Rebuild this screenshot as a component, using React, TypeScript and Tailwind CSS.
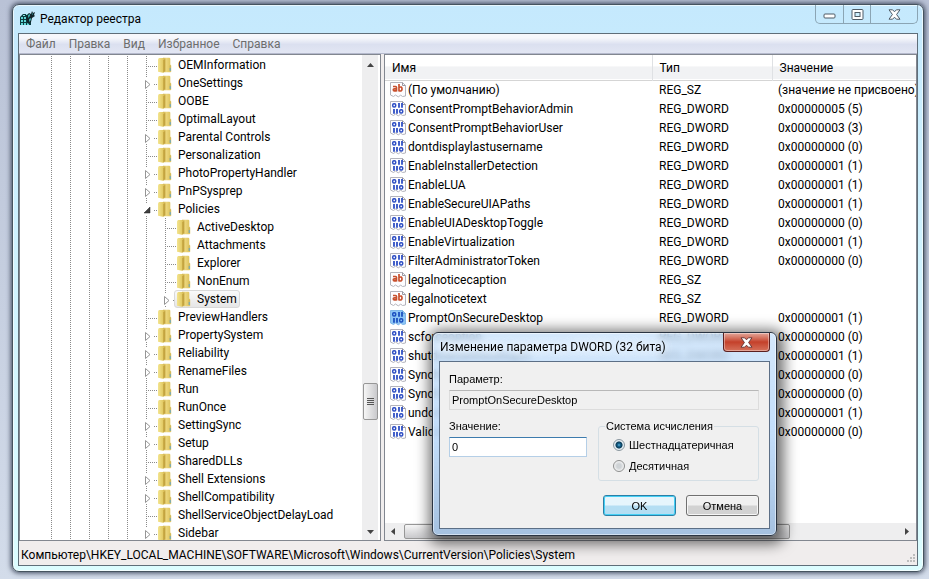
import type { ReactNode } from "react";

const uiFont = "font-['Roboto','Open_Sans',sans-serif]";

type Expander = "none" | "closed" | "open";
type Node = { name: string; expander?: Expander; level?: number; selected?: boolean };

const nodes: Node[] = [
  { name: "OEMInformation" },
  { name: "OneSettings", expander: "closed" },
  { name: "OOBE" },
  { name: "OptimalLayout" },
  { name: "Parental Controls", expander: "closed" },
  { name: "Personalization" },
  { name: "PhotoPropertyHandler", expander: "closed" },
  { name: "PnPSysprep", expander: "closed" },
  { name: "Policies", expander: "open" },
  { name: "ActiveDesktop", level: 1 },
  { name: "Attachments", level: 1 },
  { name: "Explorer", level: 1 },
  { name: "NonEnum", level: 1 },
  { name: "System", level: 1, expander: "closed", selected: true },
  { name: "PreviewHandlers" },
  { name: "PropertySystem", expander: "closed" },
  { name: "Reliability", expander: "closed" },
  { name: "RenameFiles", expander: "closed" },
  { name: "Run" },
  { name: "RunOnce" },
  { name: "SettingSync", expander: "closed" },
  { name: "Setup", expander: "closed" },
  { name: "SharedDLLs" },
  { name: "Shell Extensions", expander: "closed" },
  { name: "ShellCompatibility", expander: "closed" },
  { name: "ShellServiceObjectDelayLoad" },
  { name: "Sidebar", expander: "closed" },
];

type Value = { name: string; type: "REG_SZ" | "REG_DWORD"; data: string; selected?: boolean };

const values: Value[] = [
  { name: "(По умолчанию)", type: "REG_SZ", data: "(значение не присвоено)" },
  { name: "ConsentPromptBehaviorAdmin", type: "REG_DWORD", data: "0x00000005 (5)" },
  { name: "ConsentPromptBehaviorUser", type: "REG_DWORD", data: "0x00000003 (3)" },
  { name: "dontdisplaylastusername", type: "REG_DWORD", data: "0x00000000 (0)" },
  { name: "EnableInstallerDetection", type: "REG_DWORD", data: "0x00000001 (1)" },
  { name: "EnableLUA", type: "REG_DWORD", data: "0x00000001 (1)" },
  { name: "EnableSecureUIAPaths", type: "REG_DWORD", data: "0x00000001 (1)" },
  { name: "EnableUIADesktopToggle", type: "REG_DWORD", data: "0x00000000 (0)" },
  { name: "EnableVirtualization", type: "REG_DWORD", data: "0x00000001 (1)" },
  { name: "FilterAdministratorToken", type: "REG_DWORD", data: "0x00000000 (0)" },
  { name: "legalnoticecaption", type: "REG_SZ", data: "" },
  { name: "legalnoticetext", type: "REG_SZ", data: "" },
  { name: "PromptOnSecureDesktop", type: "REG_DWORD", data: "0x00000001 (1)", selected: true },
  { name: "scforceoption", type: "REG_DWORD", data: "0x00000000 (0)" },
  { name: "shutdownwithoutlogon", type: "REG_DWORD", data: "0x00000001 (1)" },
  { name: "SynchronousMachineGroupPolicy", type: "REG_DWORD", data: "0x00000000 (0)" },
  { name: "SynchronousUserGroupPolicy", type: "REG_DWORD", data: "0x00000000 (0)" },
  { name: "undockwithoutlogon", type: "REG_DWORD", data: "0x00000001 (1)" },
  { name: "ValidateAdminCodeSignatures", type: "REG_DWORD", data: "0x00000000 (0)" },
];

function AppIcon() {
  return (
    <svg width="17" height="17" viewBox="0 0 17 17" aria-hidden="true">
      <path d="M1 7l3-3h7l1 2v9H1z" fill="#0d3b3f" />
      <path d="M2 7h2v2H2zM5 7h2v2H5zM2 10h2v2H2zM5 10h2v2H5zM2 13h2v2H2zM5 13h2v2H5zM8 13h2v2H8z" fill="#5fd6d6" />
      <path d="M4 5h2v1H4zM7 4h2v1H7z" fill="#8de6e6" />
      <path d="M8 5l2-2 2 1 1-3 1 2 2-1-1 3 1 1-3 2-1 4-3 2-2-5z" fill="#10242a" />
      <path d="M9 5l2-1v2l-2 2zM10 9l2-1v2l-2 2zM13 3l1 1-1 1z" fill="#3aa9a9" />
    </svg>
  );
}

function FolderIcon() {
  return (
    <svg width="14" height="16" viewBox="0 0 14 16" className="shrink-0" aria-hidden="true">
      <defs>
        <linearGradient id="folder-cover" x1="0" x2="1">
          <stop offset="0" stopColor="#f3e48f" />
          <stop offset="1" stopColor="#dfc55c" />
        </linearGradient>
        <linearGradient id="folder-back" x1="0" x2="1">
          <stop offset="0" stopColor="#c9ab48" />
          <stop offset="0.400" stopColor="#ecd67c" />
          <stop offset="1" stopColor="#dcc15a" />
        </linearGradient>
      </defs>
      <path d="M5 .8h6.500l.8.800v6l.9.900v6.200l-.8.500H5z" fill="url(#folder-back)" />
      <path d="M0 2.200L1 1h4l1 1v13.200l-1.200.5L0 14.700z" fill="url(#folder-cover)" />
      <path d="M5.200 3l2-1v12l-2 1.500z" fill="#c4a440" />
      <path d="M11.500 8.500h1.300v5.500h-1.300z" fill="#cdb65c" />
      <path d="M11.700 11h1.100v3h-1.100z" fill="#6fa9bd" />
    </svg>
  );
}

function Connector({ expander = "none" }: { expander?: Expander }) {
  return (
    <svg width="9" height="18" viewBox="0 0 9 18" className="shrink-0 overflow-visible" shapeRendering="crispEdges" aria-hidden="true">
      {expander === "none" ? (
        <path d="M.5 0v18M0 10.500h11" stroke="#8a8a8a" strokeDasharray="1 1" fill="none" />
      ) : (
        <>
          <path d="M.5 0v4M.5 16v2M8 10.500h4" stroke="#8a8a8a" strokeDasharray="1 1" fill="none" />
          {expander === "closed" ? (
            <path d="M-.5 6.500v8L4 10.500z" fill="#fff" stroke="#959595" shapeRendering="auto" />
          ) : (
            <path d="M4 7v6h-6z" fill="#404040" stroke="#202020" strokeWidth="0.500" shapeRendering="auto" />
          )}
        </>
      )}
    </svg>
  );
}

function ValueIcon({ type, selected }: { type: Value["type"]; selected?: boolean }) {
  return (
    <svg width="17" height="17" viewBox="0 0 17 17" className="shrink-0" aria-hidden="true">
      <path d="M.5 1.500h12l3 3v10.500l-3 .5-2-1.500-2 2-3-2-2 1.500-3-1.500z" fill={selected ? "#8ec6f5" : "#fdfdff"} stroke={selected ? "#7fb6e8" : "#b4b4bc"} />
      <path d="M12.500 1.500v3h3" fill="none" stroke={selected ? "#6ea6d8" : "#9a9aa2"} />
      {type === "REG_SZ" ? (
        <g fill="none" stroke="#c8502e" strokeWidth="1.700">
          <path d="M3 5.500h2.500q1 0 1 1v4M6.500 7.800H4.300q-1 0-1 1t1 1h2.200" />
          <path d="M9 3v7.500M9 6.500q3-1.500 3 1.400T9 9.700" />
        </g>
      ) : (
        <g fill="none" stroke={selected ? "#1c50c0" : "#2f4fc4"} shapeRendering="geometricPrecision">
          <rect x="2.700" y="3.700" width="3" height="3.300" rx="1.200" strokeWidth="1.500" />
          <path d="M9 3v4.700M12 3v4.700M4 9v4.700M7 9v4.700" strokeWidth="1.800" />
          <rect x="9.700" y="9.700" width="3" height="3.300" rx="1.200" strokeWidth="1.500" />
        </g>
      )}
    </svg>
  );
}

function TreePane() {
  return (
    <div className="flex w-[362px] shrink-0 overflow-hidden border border-[#828790] bg-white pr-[2px]">
      <ul className="min-w-0 flex-1 pt-px" role="tree">
        {nodes.map((n) => (
          <li key={n.name} role="treeitem" className="flex h-[18px] items-center pl-[31px]">
            {[0, 1, 2, 3, 4].map((g) => (
              <Guide key={g} />
            ))}
            {n.level === 1 && <Guide />}
            <Connector expander={n.expander} />
            <span
              className={
                n.selected
                  ? "flex h-[18px] items-center gap-[6px] rounded-[3px] border border-[#d9d9d9] bg-gradient-to-b from-[#fafafa] to-[#e6e6e6] px-[2px]"
                  : "flex h-[18px] items-center gap-[6px] px-[3px]"
              }
            >
              <FolderIcon />
              <span className="whitespace-nowrap">{n.name}</span>
            </span>
          </li>
        ))}
      </ul>
      <div className="flex w-[16px] flex-col items-center bg-[#eeeeef]">
        <ScrollArrow d="M0 4h7L3.500 0z" className="mt-[8px]" />
        <div className="flex-[320] shrink-0" />
        <div className="flex h-[37px] w-[15px] shrink-0 flex-col items-center justify-center gap-px rounded-[2px] border border-[#979797] bg-gradient-to-r from-[#f6f6f6] to-[#c9c9cc]">
          {[0, 1, 2, 3].map((i) => (
            <span key={i} className="h-px w-[7px] bg-[#555]" />
          ))}
        </div>
        <div className="flex-[112] shrink-0" />
        <ScrollArrow d="M0 0h7L3.500 4z" className="mb-[5px]" />
      </div>
    </div>
  );
}

function Guide() {
  return (
    <svg width="19" height="18" className="shrink-0" shapeRendering="crispEdges" aria-hidden="true">
      <path d="M.5 0v18" stroke="#8a8a8a" strokeDasharray="1 1" />
    </svg>
  );
}

function ScrollArrow({ d, className }: { d: string; className: string }) {
  return (
    <svg width="7" height="5" viewBox="0 0 7 5" className={`shrink-0 overflow-visible ${className}`} aria-hidden="true">
      <path d={d} fill="#444" />
    </svg>
  );
}

function ListPane() {
  return (
    <div className="flex min-w-0 flex-1 flex-col overflow-hidden border border-[#828790] bg-white">
      <div className="min-h-0 flex-1 overflow-hidden">
        <table className="w-full table-fixed border-collapse">
          <colgroup>
            <col className="w-[267px]" />
            <col className="w-[120px]" />
            <col />
          </colgroup>
          <thead>
            <tr className="h-[25px] border-b border-[#d5d5d5] bg-gradient-to-b from-white from-45% to-[#f1f2f4] to-50%">
              <th className="border-r border-[#dfe1e4] p-0 pt-[2px] pl-[7px] text-left font-normal">Имя</th>
              <th className="border-r border-[#dfe1e4] p-0 pt-[2px] pl-[7px] text-left font-normal">Тип</th>
              <th className="p-0 pt-[2px] pl-[7px] text-left font-normal">Значение</th>
            </tr>
          </thead>
          <tbody>
            {values.map((v) => (
              <tr key={v.name} className="h-[19px] whitespace-nowrap">
                <td className="p-0 pl-[5px]">
                  <div className="flex items-center gap-px">
                    <ValueIcon type={v.type} selected={v.selected} />
                    <span>{v.name}</span>
                  </div>
                </td>
                <td className="p-0 pl-[7px]">{v.type}</td>
                <td className="overflow-hidden p-0 pl-[6px]">{v.data}</td>
              </tr>
            ))}
          </tbody>
        </table>
      </div>
      <div className="flex h-[17px] shrink-0 items-center bg-[#eeeeef] px-[5px]">
        <ScrollArrow d="M5 -1v7L1 2.500z" className="mr-[7px]" />
        <div className="h-[15px] w-[386px] rounded-[2px] border border-[#979797] bg-gradient-to-b from-[#f6f6f6] to-[#c9c9cc]" />
        <div className="flex-1" />
        <ScrollArrow d="M1 -1v7l4-3.500z" className="" />
      </div>
    </div>
  );
}

function CaptionButtons() {
  return (
    <div className="flex h-[19px] w-[103px] shrink-0 rounded-b-[5px] border border-t-0 border-[#8ba5b4] text-[#4f5b66]">
      <button type="button" aria-label="Свернуть" className="flex w-[28px] items-center justify-center border-r border-[#8ba5b4] pt-[3px]">
        <svg width="13" height="6" viewBox="0 0 13 6"><rect x="1" y="1" width="11" height="4" rx="1" fill="#fff" stroke="currentColor" /></svg>
      </button>
      <button type="button" aria-label="Развернуть" className="flex w-[27px] items-center justify-center border-r border-[#8ba5b4]">
        <svg width="13" height="11" viewBox="0 0 13 11">
          <rect x="1" y=".500" width="11" height="10" rx="1" fill="#fff" stroke="currentColor" />
          <rect x="4" y="3.500" width="5" height="4" fill="#cdefff" stroke="currentColor" />
        </svg>
      </button>
      <button type="button" aria-label="Закрыть" className="flex flex-1 items-center justify-center">
        <CloseGlyph fill="#fff" stroke="#4f5b66" />
      </button>
    </div>
  );
}

function CloseGlyph({ fill, stroke }: { fill: string; stroke: string }) {
  return (
    <svg width="13" height="11" viewBox="0 0 13 11" aria-hidden="true">
      <path d="M1 .8h3.600l1.900 2 1.900-2H12L8.600 5.500l3.400 4.700H8.400l-1.900-2-1.900 2H1l3.400-4.700z" fill={fill} stroke={stroke} strokeLinejoin="round" />
    </svg>
  );
}

function Radio({ label, checked }: { label: string; checked?: boolean }) {
  return (
    <label className="flex items-center gap-[4px]">
      <input
        type="radio"
        name="base"
        defaultChecked={checked}
        className="size-[12px] appearance-none rounded-full border border-[#8e8f8f] bg-[radial-gradient(circle,#cfd3d6_30%,#f6f6f6_75%)] checked:border-[#8a979f] checked:bg-[radial-gradient(circle_at_50%_50%,#5fb4dc_0,#15608a_22%,#0b3a55_44%,#e4eef4_56%)]"
      />
      <span>{label}</span>
    </label>
  );
}

function Button({ children, primary }: { children: ReactNode; primary?: boolean }) {
  return (
    <button
      type="button"
      className={
        primary
          ? "h-[21px] w-[73px] rounded-[3px] border border-[#2c7fa6] bg-gradient-to-b from-[#e6f5fc] from-45% to-[#b4def3] to-55% shadow-[inset_0_0_0_1px_#45d0f5]"
          : "h-[21px] w-[73px] rounded-[3px] border border-[#707070] bg-gradient-to-b from-[#f0f0f0] from-45% to-[#d2d2d2] to-55% shadow-[inset_0_0_0_1px_#f6f6f6]"
      }
    >
      {children}
    </button>
  );
}

function EditDialog() {
  return (
    <div
      role="dialog"
      aria-labelledby="dialog-title"
      className="absolute top-[332px] left-[432px] w-[345px] rounded-[6px] border border-[#2a3442] bg-gradient-to-b from-[#c6e0fa]/75 via-[#bcdafa]/90 to-[#a5c1e0] px-[6px] pb-[6px] shadow-[0_0_0_1px_#ffffff80_inset,2px_3px_14px_5px_#00000090] backdrop-blur-[3px]"
    >
      <div className="flex h-[28px] items-start justify-between">
        <h2 id="dialog-title" className="pt-[6px] pl-px text-[12px] leading-[16px] [text-shadow:0_0_8px_#fff,0_0_8px_#fff]">
          Изменение параметра DWORD (32 бита)
        </h2>
        <button
          type="button"
          aria-label="Закрыть"
          className="flex h-[19px] w-[47px] items-center justify-center rounded-b-[4px] border border-t-0 border-[#5b2020] bg-gradient-to-b from-[#e2a69a] from-0% via-[#c4402a] via-50% to-[#d5705a] shadow-[inset_0_0_0_1px_#ffffff60]"
        >
          <CloseGlyph fill="#fff" stroke="#6b3a3a" />
        </button>
      </div>
      <form className="flex flex-col border border-[#5c6f86] bg-[#f0f0f0] pt-[9px] pr-[10px] pb-[12px] pl-[9px] font-['Liberation_Sans',Arial,sans-serif] text-[11px] leading-[16px]">
        <label htmlFor="param">Параметр:</label>
        <input id="param" readOnly defaultValue="PromptOnSecureDesktop" className="mt-[3px] h-[20px] border border-[#dcdcdc] border-t-[#b8b8b8] bg-[#f0f0f0] px-[2px]" />
        <div className="mt-[8px] flex justify-between">
          <div className="flex w-[138px] flex-col">
            <label htmlFor="value">Значение:</label>
            <input id="value" defaultValue="0" className="mt-[3px] h-[20px] border border-[#b5cfe7] border-t-[#3d7bad] bg-white px-[2px]" />
          </div>
          <fieldset className="h-[63px] w-[161px] rounded-[3px] border border-[#d5dfe5] px-[14px]">
            <legend className="-ml-[8px] px-px">Система исчисления</legend>
            <div className="flex flex-col gap-[5px] pt-[3px]">
              <Radio label="Шестнадцатеричная" checked />
              <Radio label="Десятичная" />
            </div>
          </fieldset>
        </div>
        <div className="mt-[14px] flex justify-end gap-[10px]">
          <Button primary>OK</Button>
          <Button>Отмена</Button>
        </div>
      </form>
    </div>
  );
}

export default function App() {
  return (
    <div className={`relative flex h-screen bg-gradient-to-b from-[#b9c2d6] to-[#d3dcea] pt-[4px] pr-[5px] pb-[7px] pl-[12px] text-[12px] leading-[16px] text-black ${uiFont}`}>
      <main className="flex min-w-0 flex-1 flex-col rounded-[7px] border border-[#46545f] bg-gradient-to-b from-[#c5e9fd] to-[#dcfdff] px-[5px] pb-[5px] shadow-[inset_0_0_0_1px_#ffffffa0,0_0_5px_1px_#3c465a]">
        <header className="flex h-[28px] shrink-0 items-start justify-between pl-px">
          <div className="flex items-center gap-[4px] pt-[5px]">
            <AppIcon />
            <h1>Редактор реестра</h1>
          </div>
          <CaptionButtons />
        </header>
        <div className="flex min-h-0 flex-1 flex-col border border-[#5f6e79] bg-[#f0eded]">
          <nav className="flex h-[20px] shrink-0 items-center gap-[13px] border-b border-[#b4b9cc] bg-gradient-to-b from-[#f7f8fc] from-20% via-[#dbe0f0] via-55% to-[#e2e6f3] pl-[7px] text-[#6d6d6d]">
            <button type="button">Файл</button>
            <button type="button">Правка</button>
            <button type="button">Вид</button>
            <button type="button">Избранное</button>
            <button type="button">Справка</button>
          </nav>
          <div className="flex min-h-0 flex-1 gap-[3px]">
            <TreePane />
            <ListPane />
          </div>
          <footer className="flex h-[24px] shrink-0 items-center justify-between pt-[4px] pl-[2px]">
            <span>Компьютер\HKEY_LOCAL_MACHINE\SOFTWARE\Microsoft\Windows\CurrentVersion\Policies\System</span>
            <svg width="12" height="12" viewBox="0 0 12 12" className="self-end" aria-hidden="true">
              <path d="M8 1h2v2H8zM5 4h2v2H5zM8 4h2v2H8zM2 7h2v2H2zM5 7h2v2H5zM8 7h2v2H8z" fill="#bdbdbd" />
            </svg>
          </footer>
        </div>
      </main>
      <EditDialog />
    </div>
  );
}
